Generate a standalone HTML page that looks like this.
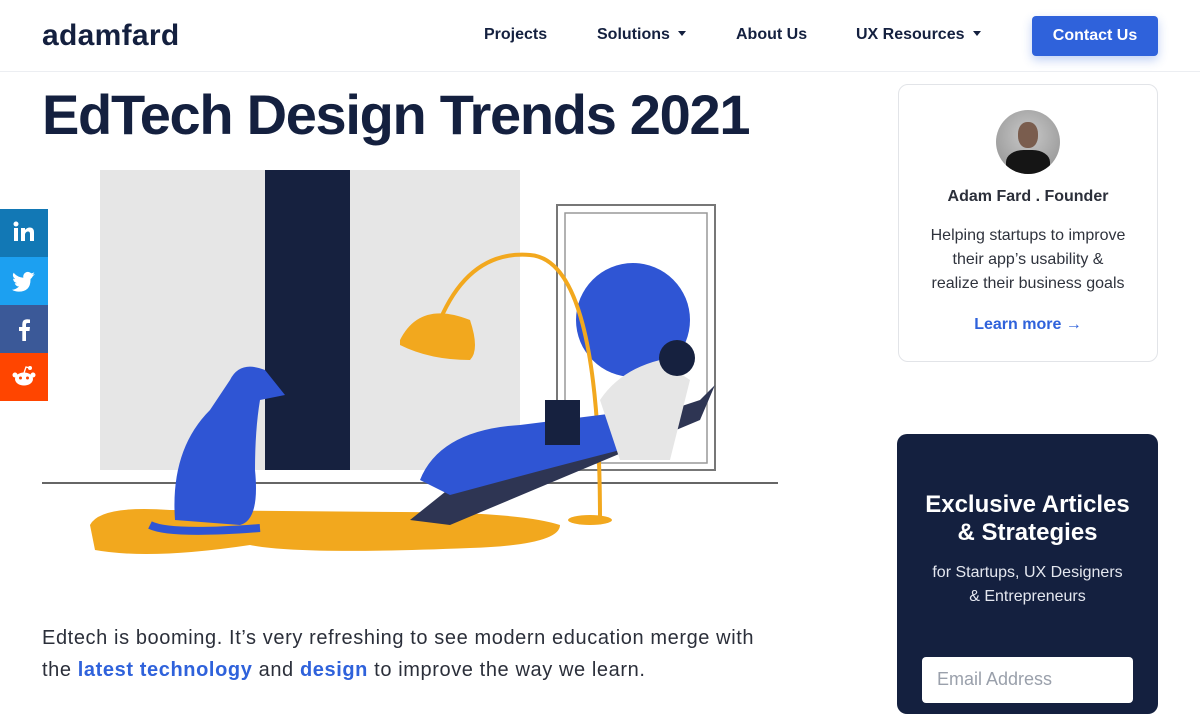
<!DOCTYPE html>
<html><head><meta charset="utf-8"><style>
*{margin:0;padding:0;box-sizing:border-box}
body{width:1200px;height:698px;overflow:hidden;background:#fff;font-family:"Liberation Sans",sans-serif;position:relative;color:#14203f}
.hdr{position:absolute;left:0;top:0;width:1200px;height:72px;border-bottom:1px solid #eceef2;background:#fff}
.logo{position:absolute;left:42px;top:19px;font-size:30px;font-weight:bold;color:#14203f;letter-spacing:0.3px}
.nav{position:absolute;top:26px;font-size:16px;font-weight:bold;color:#14203f}
.caret{display:inline-block;width:0;height:0;border-left:4.5px solid transparent;border-right:4.5px solid transparent;border-top:5px solid #14203f;margin-left:8px;vertical-align:3px}
.btn{position:absolute;left:1032px;top:16px;width:126px;height:40px;background:#2f62db;border-radius:4px;color:#fff;font-size:16px;font-weight:bold;text-align:center;line-height:40px;box-shadow:0 4px 10px rgba(47,98,219,.3)}
h1{position:absolute;left:42px;top:82px;font-size:56px;font-weight:bold;color:#14203f;letter-spacing:-1.3px}
.soc{position:absolute;left:0;width:48px;height:48px}
.p{position:absolute;left:42px;font-size:20px;color:#2b2f3a;letter-spacing:0.6px}
.p b{color:#2f62db}
.card{position:absolute;left:898px;top:84px;width:260px;height:278px;border:1px solid #e2e4e8;border-radius:10px;text-align:center}
.dark{position:absolute;left:897px;top:434px;width:261px;height:280px;background:#14203f;border-radius:10px;text-align:center;color:#fff}
</style></head><body>
<div class="hdr">
<div class="logo">adamfard</div>
<div class="nav" style="left:484px">Projects</div>
<div class="nav" style="left:597px">Solutions<span class="caret"></span></div>
<div class="nav" style="left:736px">About Us</div>
<div class="nav" style="left:856px">UX Resources<span class="caret"></span></div>
<div class="btn">Contact Us</div>
</div>
<h1>EdTech Design Trends 2021</h1>

<svg style="position:absolute;left:40px;top:165px" width="745" height="400" viewBox="40 165 745 400">
<rect x="100" y="170" width="420" height="300" fill="#e6e6e6"/>
<rect x="265" y="170" width="85" height="300" fill="#16213f"/>
<rect x="557" y="205" width="158" height="265" fill="none" stroke="#777" stroke-width="2"/>
<rect x="565" y="213" width="142" height="250" fill="none" stroke="#999" stroke-width="1.5"/>
<circle cx="633" cy="320" r="57" fill="#2f55d4"/>
<line x1="42" y1="483" x2="778" y2="483" stroke="#666" stroke-width="2"/>
<path d="M90 525 Q100 505 170 510 L400 512 Q520 512 560 525 Q560 545 470 548 Q300 555 250 545 Q150 560 95 550 Z" fill="#f2a81e"/>
<path d="M600 520 Q600 260 530 255 Q470 250 440 320" fill="none" stroke="#f2a81e" stroke-width="4"/>
<path d="M400 340 Q420 300 470 320 Q480 350 470 360 Q430 360 400 345Z" fill="#f2a81e"/>
<ellipse cx="590" cy="520" rx="22" ry="5" fill="#f2a81e"/>
<path d="M175 520 Q170 450 210 410 L230 380 Q240 360 265 370 L285 395 L260 400 Q255 430 255 470 Q260 520 240 525 Z" fill="#2f55d4"/>
<path d="M150 525 Q170 535 260 528" stroke="#2f55d4" stroke-width="8" fill="none"/>
<path d="M410 520 L460 480 L700 400 L715 385 L700 420 L450 525Z" fill="#2e3553"/>
<path d="M420 480 Q440 430 520 425 L640 410 L660 440 Q560 465 450 495Z" fill="#2f55d4"/>
<path d="M600 400 Q620 370 660 360 L690 380 L670 460 L620 460Z" fill="#e6e6e6"/>
<circle cx="677" cy="358" r="18" fill="#16213f"/>
<rect x="545" y="400" width="35" height="45" fill="#16213f"/>
</svg>

<div class="soc" style="top:209px;background:#1278b5"><svg width="48" height="48"><rect x="14" y="19" width="4" height="13" fill="#fff"/><circle cx="16" cy="15" r="2.5" fill="#fff"/><path d="M21 19h4v2q2-2.5 5-2.5 4 0 4 5V32h-4v-7q0-2.5-2-2.5T25 25v7h-4z" fill="#fff"/></svg></div>
<div class="soc" style="top:257px;background:#1ca0f1"><svg width="48" height="48"><path d="M35 17q-1.3.6-2.7.8 1.5-1 2-2.6-1.4.9-3 1.2a4.7 4.7 0 0 0-8 4.3q-5.8-.3-9.700-4.900-2 3.500 1.500 6.300-1 0-2-.6 0 3.600 3.700 4.600-1 .3-2.100.1a4.700 4.700 0 0 0 4.400 3.300Q15 33 12 32.700q3 1.900 6.700 1.900 11.800 0 11.800-12V22q1.400-1 2.500-3z" fill="#fff"/></svg></div>
<div class="soc" style="top:305px;background:#3b5998"><svg width="48" height="48"><path d="M26 36V26h3.500l.5-4h-4v-2.500q0-1.500 1.700-1.500H30v-3.500q-1-.2-3-.2-4.700 0-4.700 5V22H19v4h3.300v10z" fill="#fff"/></svg></div>
<div class="soc" style="top:353px;background:#ff4500"><svg width="48" height="48"><ellipse cx="24" cy="26" rx="9" ry="6.500" fill="#fff"/><circle cx="15" cy="22" r="2.500" fill="#fff"/><circle cx="33" cy="22" r="2.500" fill="#fff"/><circle cx="30" cy="15" r="2" fill="#fff"/><path d="M24 20l2-6 4 1" stroke="#fff" stroke-width="1.300" fill="none"/><circle cx="20.500" cy="25" r="1.500" fill="#ff4500"/><circle cx="27.500" cy="25" r="1.500" fill="#ff4500"/></svg></div>

<div class="p" style="top:627px">Edtech is booming. It’s very refreshing to see modern education merge with</div>
<div class="p" style="top:659px">the <b>latest technology</b> and <b>design</b> to improve the way we learn.</div>

<div class="card">
<div style="width:64px;height:64px;border-radius:50%;background:radial-gradient(circle at 50% 40%,#c9c9c9,#8d8d8d);margin:25px auto 0;position:relative;overflow:hidden"><div style="position:absolute;left:22px;top:12px;width:20px;height:26px;border-radius:45%;background:#7a5d4e"></div><div style="position:absolute;left:10px;top:40px;width:44px;height:30px;border-radius:40% 40% 0 0;background:#151515"></div></div>
<div style="margin-top:14px;font-size:16px;font-weight:bold;color:#2b2f3a">Adam Fard . Founder</div>
<div style="margin-top:18px;font-size:16px;line-height:24px;color:#2f333d">Helping startups to improve<br>their app’s usability &amp;<br>realize their business goals</div>
<div style="margin-top:20px;font-size:16px;font-weight:bold;color:#2f62db">Learn more →</div>
</div>

<div class="dark">
<div style="margin-top:57px;font-size:24px;font-weight:bold;line-height:28px">Exclusive Articles<br>&amp; Strategies</div>
<div style="margin-top:14px;font-size:16px;line-height:24px;color:#e4e7ef">for Startups, UX Designers<br>&amp; Entrepreneurs</div>
<div style="margin:48px auto 0;width:211px;height:46px;background:#fff;border-radius:4px;text-align:left;padding:12px 15px;color:#9aa0ab;font-size:18px">Email Address</div>
</div>
</body></html>
